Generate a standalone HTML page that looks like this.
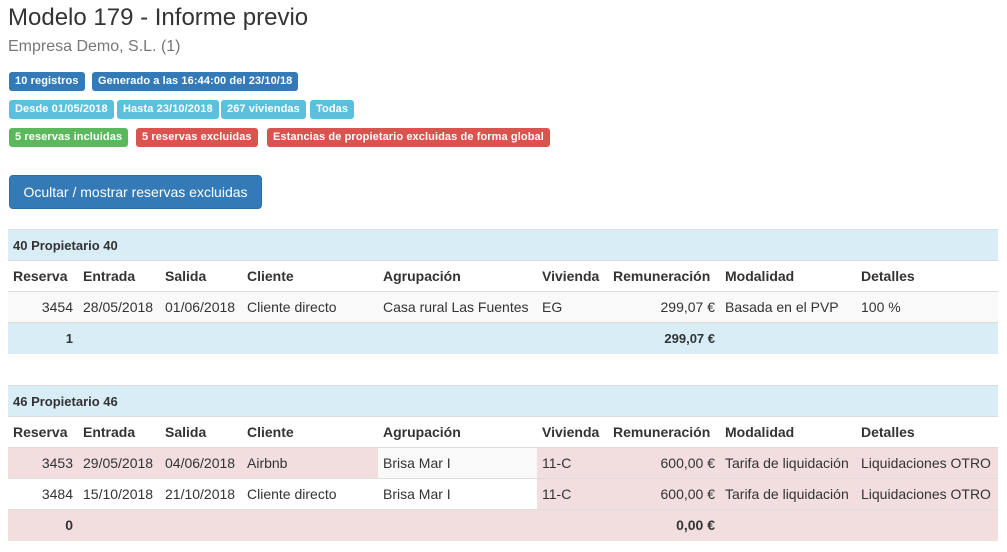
<!DOCTYPE html>
<html><head><meta charset="utf-8"><style>
*{box-sizing:border-box}
body{margin:0;background:#fff;font-family:"Liberation Sans",Arial,sans-serif;color:#333;font-size:14px;width:1007px;height:552px;overflow:hidden;position:relative}
.a{position:absolute;white-space:nowrap}
h1{position:absolute;left:8px;top:4px;margin:0;font-size:24px;font-weight:normal;color:#333}
.sub{left:8px;top:38px;font-size:16px;color:#777}
.lb{position:absolute;height:19px;line-height:19px;font-size:11px;font-weight:bold;color:#fff;padding:0 6px;border-radius:3px;white-space:nowrap;letter-spacing:0.1px}
.p{background:#337ab7}.i{background:#5bc0de}.s{background:#5cb85c}.d{background:#d9534f}
.btn{position:absolute;left:9px;top:175px;width:253px;height:34px;background:#337ab7;border:1px solid #2e6da4;border-radius:4px;color:#fff;font-size:14px;line-height:32px;text-align:center}
table{position:absolute;left:8px;width:990px;border-collapse:collapse;table-layout:fixed}
td,th{height:31px;padding:0 5px;white-space:nowrap;overflow:hidden;border-top:1px solid #ddd;font-size:14px}
th{font-weight:bold;text-align:left}
.g td{background:#d9edf7;font-weight:bold;font-size:13px}
.z td{background:#f9f9f9}
.r{text-align:right}
.k{background:#f2dede}
.tot td{font-weight:bold}
</style></head><body>
<h1>Modelo 179 - Informe previo</h1>
<div class="a sub">Empresa Demo, S.L. (1)</div>
<span class="lb p" style="left:9px;top:72px">10 registros</span>
<span class="lb p" style="left:92px;top:72px">Generado a las 16:44:00 del 23/10/18</span>
<span class="lb i" style="left:9px;top:100px">Desde 01/05/2018</span>
<span class="lb i" style="left:117px;top:100px">Hasta 23/10/2018</span>
<span class="lb i" style="left:221px;top:100px">267 viviendas</span>
<span class="lb i" style="left:310px;top:100px">Todas</span>
<span class="lb s" style="left:9px;top:128px">5 reservas incluidas</span>
<span class="lb d" style="left:136px;top:128px">5 reservas excluidas</span>
<span class="lb d" style="left:267px;top:128px">Estancias de propietario excluidas de forma global</span>
<div class="btn">Ocultar / mostrar reservas excluidas</div>

<table style="top:229px">
<colgroup><col style="width:70px"><col style="width:82px"><col style="width:82px"><col style="width:136px"><col style="width:159px"><col style="width:71px"><col style="width:112px"><col style="width:136px"><col style="width:142px"></colgroup>
<tr class="g"><td colspan="9">40 Propietario 40</td></tr>
<tr><th>Reserva</th><th>Entrada</th><th>Salida</th><th>Cliente</th><th>Agrupación</th><th>Vivienda</th><th>Remuneración</th><th>Modalidad</th><th>Detalles</th></tr>
<tr class="z"><td class="r">3454</td><td>28/05/2018</td><td>01/06/2018</td><td>Cliente directo</td><td>Casa rural Las Fuentes</td><td>EG</td><td class="r">299,07 €</td><td>Basada en el PVP</td><td>100 %</td></tr>
<tr class="g tot"><td class="r">1</td><td></td><td></td><td></td><td></td><td></td><td class="r">299,07 €</td><td></td><td></td></tr>
</table>

<table style="top:385px">
<colgroup><col style="width:70px"><col style="width:82px"><col style="width:82px"><col style="width:136px"><col style="width:159px"><col style="width:71px"><col style="width:112px"><col style="width:136px"><col style="width:142px"></colgroup>
<tr class="g"><td colspan="9">46 Propietario 46</td></tr>
<tr><th>Reserva</th><th>Entrada</th><th>Salida</th><th>Cliente</th><th>Agrupación</th><th>Vivienda</th><th>Remuneración</th><th>Modalidad</th><th>Detalles</th></tr>
<tr><td class="r k">3453</td><td class="k">29/05/2018</td><td class="k">04/06/2018</td><td class="k">Airbnb</td><td style="background:#f9f9f9">Brisa Mar I</td><td class="k">11-C</td><td class="r k">600,00 €</td><td class="k">Tarifa de liquidación</td><td class="k">Liquidaciones OTRO</td></tr>
<tr><td class="r">3484</td><td>15/10/2018</td><td>21/10/2018</td><td>Cliente directo</td><td>Brisa Mar I</td><td class="k">11-C</td><td class="r k">600,00 €</td><td class="k">Tarifa de liquidación</td><td class="k">Liquidaciones OTRO</td></tr>
<tr class="tot"><td class="r k">0</td><td class="k"></td><td class="k"></td><td class="k"></td><td class="k"></td><td class="k"></td><td class="r k">0,00 €</td><td class="k"></td><td class="k"></td></tr>
</table>
</body></html>
